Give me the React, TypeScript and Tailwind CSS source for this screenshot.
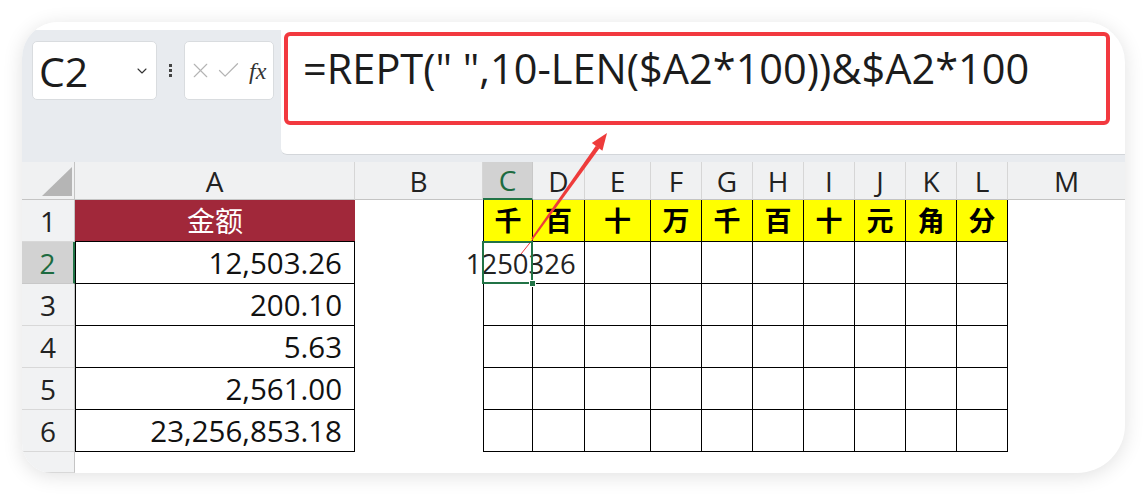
import { ChevronDown, X, Check } from "lucide-react";

const letters = ["A", "B", "C", "D", "E", "F", "G", "H", "I", "J", "K", "L", "M"];
const amounts = ["12,503.26", "200.10", "5.63", "2,561.00", "23,256,853.18"];
const units = ["千", "百", "十", "万", "千", "百", "十", "元", "角", "分"];

function SelectAll() {
  return (
    <div className="relative bg-[#f0f1f2] border-r border-b border-[#c4c4c4]">
      <svg className="absolute right-[2px] bottom-[3px]" width="30" height="29" viewBox="0 0 30 29">
        <polygon points="30,0 30,29 0,29" fill="#b5b5b5" />
      </svg>
    </div>
  );
}

function ColHeader({ l, active, last }: { l: string; active?: boolean; last?: boolean }) {
  if (active) {
    return (
      <div className="flex items-center justify-center bg-[#d2d2d2] border-r border-[#c8c8c8] border-b-2 border-b-[#217346] text-[#1d6b40] text-[28px] leading-none">
        {l}
      </div>
    );
  }
  return (
    <div
      className={
        "flex items-center justify-center bg-[#f0f1f2] border-b border-[#c4c4c4] text-[#222] text-[28px] leading-none " +
        (last ? "" : "border-r border-r-[#d6d6d6]")
      }
    >
      {l}
    </div>
  );
}

function RowHeader({ n, active }: { n: string; active?: boolean }) {
  if (active) {
    return (
      <div className="flex items-center justify-center bg-[#d2d2d2] border-r-2 border-r-[#217346] border-b border-b-[#c8c8c8] text-[#1d6b40] text-[28px] leading-none">
        {n}
      </div>
    );
  }
  return (
    <div className="flex items-center justify-center bg-[#f1f2f3] border-r border-r-[#c4c4c4] border-b border-b-[#d8d8d8] text-[#222] text-[28px] leading-none">
      {n}
    </div>
  );
}

export default function App() {
  const gridCols =
    "grid grid-cols-[53px_280px_128px_50px_52px_66px_51px_51px_51px_51px_51px_51px_51px_1fr] grid-rows-[38px_42px_42px_42px_42px_42px_42px_1fr]";

  const cells: JSX.Element[] = [];
  cells.push(<SelectAll key="sa" />);
  letters.forEach((l, i) =>
    cells.push(<ColHeader key={"h" + l} l={l} active={l === "C"} last={i === letters.length - 1} />)
  );

  for (let r = 1; r <= 7; r++) {
    cells.push(<RowHeader key={"r" + r} n={r <= 6 ? String(r) : ""} active={r === 2} />);
    if (r === 1) {
      cells.push(
        <div
          key="A1"
          className="flex items-center justify-center bg-[#a1283a] text-white text-[28px] leading-none border-b border-black"
        >
          金额
        </div>
      );
    } else if (r <= 6) {
      cells.push(
        <div
          key={"A" + r}
          className="flex items-center justify-end pr-[12px] border-l border-r border-b border-black text-[#111] text-[29.5px] leading-none"
        >
          {amounts[r - 2]}
        </div>
      );
    } else {
      cells.push(<div key={"A" + r} />);
    }
    cells.push(<div key={"B" + r} />);
    for (let c = 0; c < 10; c++) {
      const key = letters[c + 2] + r;
      if (r === 7) {
        cells.push(<div key={key} />);
        continue;
      }
      const base = "border-r border-b border-black " + (c === 0 ? "border-l " : "");
      if (r === 1) {
        cells.push(
          <div
            key={key}
            className={base + "flex items-center justify-center bg-[#ffff00] text-black font-bold text-[27px] leading-none"}
          >
            {units[c]}
          </div>
        );
      } else if (r === 2 && c === 0) {
        cells.push(
          <div key={key} className={base + "relative flex items-center justify-center overflow-visible"}>
            <span className="whitespace-pre text-[27.5px] leading-none text-[#222] relative top-[1px] left-[2px]">
              {"   1250326"}
            </span>
            <div className="absolute -left-[2px] -top-[1px] -right-[1px] -bottom-[1px] border-2 border-[#217346] z-10" />
            <div className="absolute -right-[4px] -bottom-[4px] w-[7px] h-[7px] bg-[#217346] border border-white z-20" />
          </div>
        );
      } else {
        cells.push(<div key={key} className={base} />);
      }
    }
    cells.push(<div key={"M" + r} />);
  }

  return (
    <div className="relative w-[1148px] h-[497px] bg-white pt-[22px] pl-[22px] font-['Open_Sans','Noto_Sans_CJK_SC',sans-serif]">
      <div className="w-[1103px] h-[451px] bg-white rounded-tl-[36px] rounded-tr-[40px] rounded-bl-[30px] rounded-br-[48px] overflow-hidden shadow-[0_3px_20px_rgba(0,0,0,0.12)] flex flex-col">
        <div className="h-[8px] bg-white shrink-0" />
        <div className="h-[132px] shrink-0 bg-[#e8ebef] flex items-start">
          <div className="ml-[10px] mt-[11px] w-[125px] h-[59px] bg-white rounded-[5px] border border-[#d9dcdf] flex items-center pl-[6px] pr-[6px]">
            <span className="text-[41px] leading-none text-[#1c1c1c] relative top-[1px]">C2</span>
            <ChevronDown className="ml-auto" size={16} strokeWidth={1.6} color="#333" />
          </div>
          <div className="w-[27px] mt-[11px] h-[59px] flex flex-col items-center justify-center gap-[2px]">
            <div className="w-[3px] h-[3px] bg-[#444]" />
            <div className="w-[3px] h-[3px] bg-[#444]" />
            <div className="w-[3px] h-[3px] bg-[#444]" />
          </div>
          <div className="mt-[11px] w-[90px] h-[59px] bg-white rounded-[5px] border border-[#d9dcdf] flex items-center pl-[3px] gap-[2px]">
            <X size={25} strokeWidth={1.1} color="#b4b4b4" />
            <Check size={27} strokeWidth={1.1} color="#b4b4b4" />
            <span className="ml-[5px] font-['Liberation_Serif',serif] italic text-[24px] text-[#333] leading-none">fx</span>
          </div>
          <div className="ml-[7px] flex-1 h-[125px] bg-white rounded-bl-[6px] border-b border-[#d3d6da] pt-[2px] pl-[3px]">
            <div className="w-[826px] h-[93px] border-[4px] border-[#f2393f] rounded-[6px] pl-[15px] pt-[5px]">
              <span className="whitespace-pre text-[41.5px] leading-[54px] text-[#1c1c1c]">
                {'=REPT(" ",10-LEN($A2*100))&$A2*100'}
              </span>
            </div>
          </div>
        </div>
        <div className={gridCols + " flex-1"}>{cells}</div>
      </div>
      <svg className="absolute left-0 top-0 pointer-events-none" width="1148" height="497" viewBox="0 0 1148 497">
        <line x1="521" y1="254" x2="533" y2="239" stroke="#ee3b3b" strokeWidth="1" />
        <polygon points="531.2,238.4 532.8,239.6 599.5,148.3 595.9,145.7" fill="#ee3b3b" />
        <polygon points="607,133 602.4,150.7 591.8,143.1" fill="#ee3b3b" />
      </svg>
    </div>
  );
}
